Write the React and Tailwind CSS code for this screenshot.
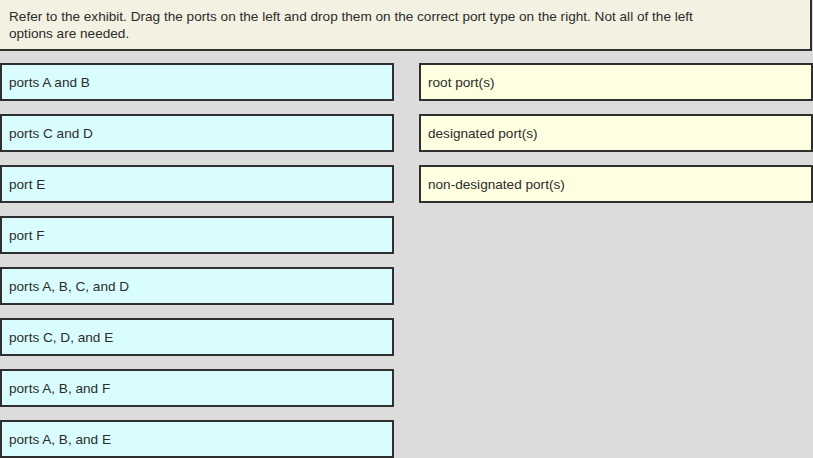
export default function App() {
  const left = [
    "ports A and B",
    "ports C and D",
    "port E",
    "port F",
    "ports A, B, C, and D",
    "ports C, D, and E",
    "ports A, B, and F",
    "ports A, B, and E",
  ];
  const right = ["root port(s)", "designated port(s)", "non-designated port(s)"];
  return (
    <div
      className="w-[813px] h-[458px] overflow-hidden bg-[#dcdcdc] text-[13.6px] leading-[17px] text-[#2c2c2c]"
      style={{ fontFamily: '"Liberation Sans", Arial, sans-serif' }}
    >
      <div className="h-[51px] w-[812px] border-2 border-t-0 border-l-0 border-[#2f2f2f] bg-[#f3f1e1] pl-[9px] pr-[100px] pt-[8px]">
        Refer to the exhibit. Drag the ports on the left and drop them on the correct port type on the right. Not all of the left options are needed.
      </div>
      <div className="flex gap-[25px] pt-[12px]">
        <div className="flex w-[394px] flex-col gap-[13px]">
          {left.map((t) => (
            <div
              key={t}
              className="flex h-[38px] items-center border-2 border-[#2f2f2f] bg-[#d9fdfe] pl-[7px]"
            >
              {t}
            </div>
          ))}
        </div>
        <div className="flex w-[394px] flex-col gap-[13px]">
          {right.map((t) => (
            <div
              key={t}
              className="flex h-[38px] items-center border-2 border-[#2f2f2f] bg-[#fefee0] pl-[7px]"
            >
              {t}
            </div>
          ))}
        </div>
      </div>
    </div>
  );
}
